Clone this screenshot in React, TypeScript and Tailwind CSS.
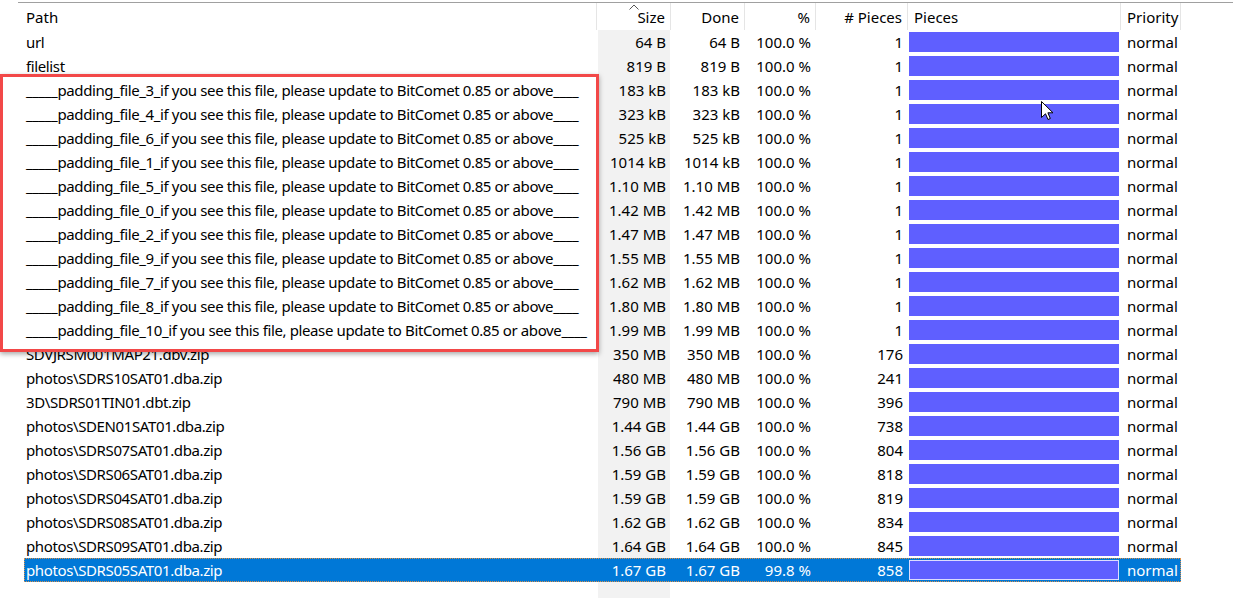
import React from "react";

type Row = {
  path: string;
  size: string;
  pct?: string;
  pieces: number;
};

const pad = (n: number) =>
  `_____padding_file_${n}_if you see this file, please update to BitComet 0.85 or above____`;

const rows: Row[] = [
  { path: "url", size: "64 B", pieces: 1 },
  { path: "filelist", size: "819 B", pieces: 1 },
  { path: pad(3), size: "183 kB", pieces: 1 },
  { path: pad(4), size: "323 kB", pieces: 1 },
  { path: pad(6), size: "525 kB", pieces: 1 },
  { path: pad(1), size: "1014 kB", pieces: 1 },
  { path: pad(5), size: "1.10 MB", pieces: 1 },
  { path: pad(0), size: "1.42 MB", pieces: 1 },
  { path: pad(2), size: "1.47 MB", pieces: 1 },
  { path: pad(9), size: "1.55 MB", pieces: 1 },
  { path: pad(7), size: "1.62 MB", pieces: 1 },
  { path: pad(8), size: "1.80 MB", pieces: 1 },
  { path: pad(10), size: "1.99 MB", pieces: 1 },
  { path: "SDVJRSM001MAP21.dbv.zip", size: "350 MB", pieces: 176 },
  { path: "photos\\SDRS10SAT01.dba.zip", size: "480 MB", pieces: 241 },
  { path: "3D\\SDRS01TIN01.dbt.zip", size: "790 MB", pieces: 396 },
  { path: "photos\\SDEN01SAT01.dba.zip", size: "1.44 GB", pieces: 738 },
  { path: "photos\\SDRS07SAT01.dba.zip", size: "1.56 GB", pieces: 804 },
  { path: "photos\\SDRS06SAT01.dba.zip", size: "1.59 GB", pieces: 818 },
  { path: "photos\\SDRS04SAT01.dba.zip", size: "1.59 GB", pieces: 819 },
  { path: "photos\\SDRS08SAT01.dba.zip", size: "1.62 GB", pieces: 834 },
  { path: "photos\\SDRS09SAT01.dba.zip", size: "1.64 GB", pieces: 845 },
  { path: "photos\\SDRS05SAT01.dba.zip", size: "1.67 GB", pct: "99.8 %", pieces: 858 },
];

function HeaderCell({ w, right, children }: { w: string; right?: boolean; children?: React.ReactNode }) {
  return (
    <div
      className={`${w} h-full flex items-center pt-[2px] border-r border-[#e5e5e5] ${right ? "justify-end pr-[5px]" : "pl-[6px]"}`}
    >
      {children}
    </div>
  );
}

export default function App() {
  const selected = rows.length - 1;
  return (
    <div
      className="relative w-[1233px] h-[598px] overflow-hidden bg-white text-[15px] text-black"
      style={{ fontFamily: '"Noto Sans", "Open Sans", sans-serif' }}
    >
      {/* header */}
      <div className="flex h-[28px] ml-[18px] border-t border-[#a0a0a0] mt-[2px] relative">
        <div className="w-[579px] h-full flex items-center pt-[2px] pl-[8px] border-r border-[#e5e5e5]">Path</div>
        <HeaderCell w="w-[74px]" right>Size</HeaderCell>
        <HeaderCell w="w-[74px]" right>Done</HeaderCell>
        <HeaderCell w="w-[71px]" right>%</HeaderCell>
        <HeaderCell w="w-[92px]" right># Pieces</HeaderCell>
        <HeaderCell w="w-[213px]">Pieces</HeaderCell>
        <HeaderCell w="w-[60px]">Priority</HeaderCell>
        <svg className="absolute left-[611px] top-[1px]" width="10" height="6" viewBox="0 0 10 6">
          <path d="M0.5 5.5 L5 1 L9.5 5.5" fill="none" stroke="#555" strokeWidth="1" />
        </svg>
      </div>

      {/* body */}
      <div className="relative">
        <div className="absolute left-[598px] top-0 w-[72px] h-[600px] bg-[#f2f2f2]" />
        <div className="relative flex flex-col">
          {rows.map((r, i) => {
            const sel = i === selected;
            return (
              <div
                key={i}
                className={`flex h-[24px] ml-[24px] w-[1157px] items-center ${
                  sel ? "bg-[#0078d7] text-white outline outline-1 outline-dotted outline-[#d9914a] -outline-offset-1" : ""
                }`}
              >
                <div className="w-[573px] pl-[2px] whitespace-nowrap overflow-hidden tracking-[-0.38px]">{r.path}</div>
                <div className="w-[74px] text-right pr-[5px]">{r.size}</div>
                <div className="w-[74px] text-right pr-[5px]">{r.size}</div>
                <div className="w-[71px] text-right pr-[5px]">{r.pct ?? "100.0 %"}</div>
                <div className="w-[92px] text-right pr-[5px]">{r.pieces}</div>
                <div className="w-[213px] h-full flex items-center pl-[1px] pr-[2px]">
                  <div
                    className={`w-full h-[20px] bg-[#5f5fff] ${sel ? "border border-[#dcdcff]" : ""}`}
                  />
                </div>
                <div className="w-[60px] pl-[6px]">normal</div>
              </div>
            );
          })}
        </div>
      </div>

      {/* annotation box */}
      <div className="absolute left-[0px] top-[74px] w-[599px] h-[278px] border-[3px] border-[#f24848] shadow-[0_2px_5px_rgba(0,0,0,0.35)]" />

      {/* mouse cursor */}
      <svg className="absolute left-[1041px] top-[101px]" width="13" height="20" viewBox="0 0 13 20">
        <path
          d="M0.5 0.5 L0.5 16.5 L4.5 12.8 L7 18.5 L9.3 17.5 L6.9 11.8 L12 11.8 Z"
          fill="white"
          stroke="black"
          strokeWidth="1"
        />
      </svg>
    </div>
  );
}
